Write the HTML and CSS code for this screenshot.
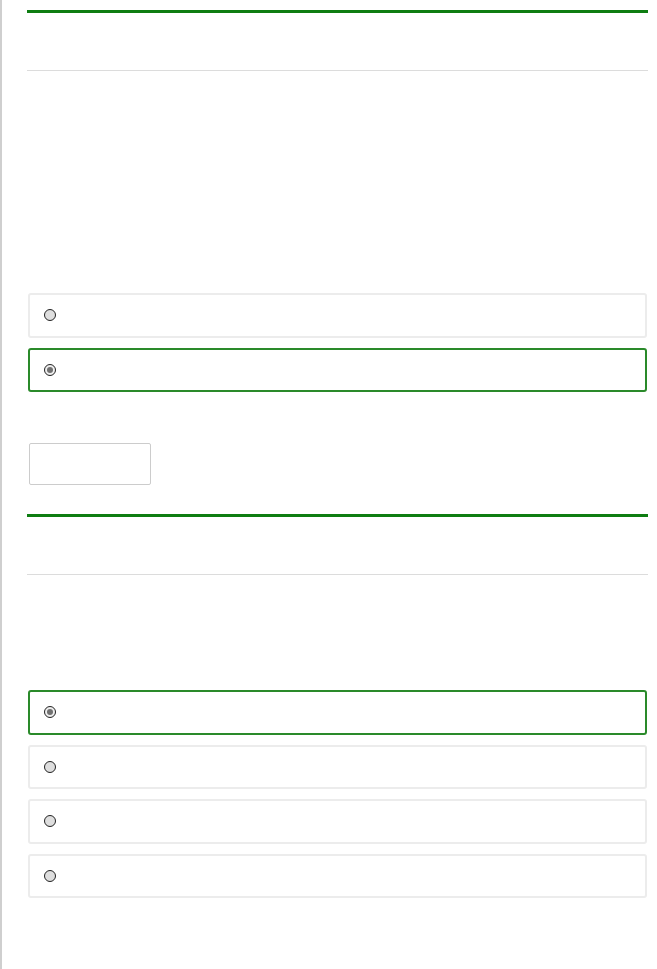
FILE: index.html
```html
<!DOCTYPE html>
<html>
<head>
<meta charset="utf-8">
<link rel="stylesheet" href="styles.css">
</head>
<body>
<div class="page">
  <section class="block block-one">
    <div class="block-head"></div>
    <div class="options options-one">
      <label class="option"><span class="radio"></span></label>
      <label class="option option-selected"><span class="radio radio-checked"></span></label>
    </div>
    <div class="button-box"></div>
  </section>
  <section class="block block-two">
    <div class="block-head"></div>
    <div class="options options-two">
      <label class="option option-selected"><span class="radio radio-checked"></span></label>
      <label class="option"><span class="radio"></span></label>
      <label class="option"><span class="radio"></span></label>
      <label class="option"><span class="radio"></span></label>
    </div>
  </section>
</div>
</body>
</html>
```
FILE: styles.css
```css
html, body {
  margin: 0;
  padding: 0;
  background: #ffffff;
  font-family: "Liberation Sans", Arial, sans-serif;
}
.page {
  box-sizing: border-box;
  height: 969px;
  border-left: 2px solid #cfcfcf;
  padding: 10px 9px 0 25px;
}
.block {
  display: flex;
  flex-direction: column;
}
.block-head {
  height: 57px;
  border-top: 3px solid #0e7d12;
  border-bottom: 1px solid #dcdcdc;
  margin-bottom: 0;
}
.options {
  display: flex;
  flex-direction: column;
  gap: 10px;
  margin-left: 1px;
  width: 619px;
}
.options-one {
  margin-top: 222px;
}
.options-two {
  margin-top: 115px;
}
.option {
  box-sizing: border-box;
  height: 44.5px;
  border: 2px solid #ececec;
  border-radius: 3px;
  display: flex;
  align-items: center;
  padding-left: 14px;
}
.option-selected {
  border-color: #2a8a2a;
}
.radio {
  box-sizing: border-box;
  width: 12px;
  height: 12px;
  border-radius: 50%;
  border: 1.5px solid #222;
  background: #dedede;
  display: inline-flex;
  align-items: center;
  justify-content: center;
}
.radio-checked {
  background: #eeeeee;
}
.radio-checked::after {
  content: "";
  width: 6px;
  height: 6px;
  border-radius: 50%;
  background: #707070;
}
.button-box {
  box-sizing: border-box;
  width: 122px;
  height: 42px;
  margin: 51px 0 0 2px;
  border: 1px solid #cccccc;
  border-radius: 2px;
}
.block-two {
  margin-top: 29px;
}
```
